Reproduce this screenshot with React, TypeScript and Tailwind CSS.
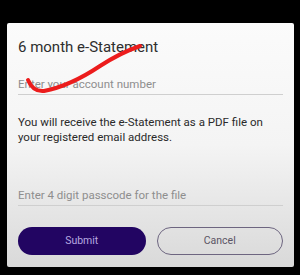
import React from "react";

export default function App() {
  return (
    <div className="relative w-[300px] h-[275px] bg-black pt-[23px] pl-[7px]" style={{ fontFamily: "Roboto, 'Liberation Sans', sans-serif" }}>
      <div className="w-[287px] h-[244px] rounded-[2px] bg-gradient-to-b from-[#fbfbfb] via-[#f4f4f4] to-[#d9d9d9] px-[11px] flex flex-col">
        <div className="mt-[14px] text-[15px] leading-[20px] text-[#2e2e2e]">6 month e-Statement</div>
        <div className="mt-[19px] text-[11.5px] leading-[16px] text-[#8e8e8e] w-[265px] border-b border-[#cfcfcf] pb-[2px]">
          Enter your account number
        </div>
        <div className="mt-[20px] text-[11.5px] leading-[15px] text-[#2a2a2a]">
          You will receive the e-Statement as a PDF file on
          <br />
          your registered email address.
        </div>
        <div className="mt-[42px] text-[11.5px] leading-[16px] text-[#8e8e8e] w-[265px] border-b border-[#cfcfcf] pb-[2px]">
          Enter 4 digit passcode for the file
        </div>
        <div className="mt-[21px] flex gap-[11px]">
          <button className="w-[128px] h-[28px] rounded-full bg-[#220562] text-[10.5px] text-[#b7a9e0]">Submit</button>
          <button className="w-[127px] h-[28px] rounded-full border-[1.5px] border-[#6d6580] text-[10.5px] text-[#5a5464]">Cancel</button>
        </div>
      </div>
      <svg className="absolute left-0 top-0" width="300" height="275" viewBox="0 0 300 275">
        <path d="M28 80 Q33 92 44 91 Q70 86 100 66 Q120 53 140 46" fill="none" stroke="#ec1c1c" strokeWidth="4" strokeLinecap="round" />
      </svg>
    </div>
  );
}
